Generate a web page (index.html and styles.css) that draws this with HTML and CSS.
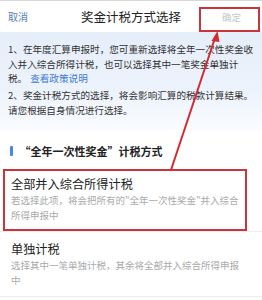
FILE: index.html
```html
<!DOCTYPE html>
<html lang="zh">
<head>
<meta charset="utf-8">
<link rel="stylesheet" href="styles.css">
</head>
<body>
<div class="page">
  <header class="nav">
    <span class="cancel">取消</span>
    <span class="title">奖金计税方式选择</span>
    <span class="confirm">确定</span>
  </header>
  <section class="info">
    <p>1、在年度汇算申报时，您可重新选择将全年一次性奖金收入并入综合所得计税，也可以选择其中一笔奖金单独计<br>税。<span class="link">查看政策说明</span></p>
    <p>2、奖金计税方式的选择，将会影响汇算的税款计算结果。请您根据自身情况进行选择。</p>
  </section>
  <h2 class="sec-title"><span class="bar"></span>“全年一次性奖金”计税方式</h2>
  <div class="option">
    <div class="opt-title">全部并入综合所得计税</div>
    <div class="opt-desc">若选择此项，将会把所有的"全年一次性奖金"并入综合所得申报中</div>
  </div>
  <div class="option">
    <div class="opt-title">单独计税</div>
    <div class="opt-desc">选择其中一笔单独计税，其余将全部并入综合所得申报中</div>
  </div>

  <div class="mark mark-confirm"></div>
  <div class="mark mark-option"></div>
  <svg class="arrow" width="262" height="300" viewBox="0 0 262 300">
    <line x1="171" y1="170" x2="215" y2="38" stroke="#d02b30" stroke-width="2"/>
    <polygon points="217.5,31 211.5,41 219.5,42" fill="#d02b30"/>
  </svg>
</div>
</body>
</html>
```

FILE: styles.css
```css
* { box-sizing: border-box; margin: 0; padding: 0; }
html, body { background: #fff; }
body {
  width: 262px;
  height: 300px;
  overflow: hidden;
  font-family: "Noto Sans CJK SC", "Noto Sans", sans-serif;
  color: #333;
}
.page { position: relative; width: 262px; height: 300px; }

.nav {
  height: 32px;
  display: grid;
  grid-template-columns: 1fr auto 1fr;
  align-items: center;
  padding: 0 8px;
  background: #fff;
  border-top: 1px solid #d8d8d8;
}
.cancel { font-size: 10px; color: #5a7fb5; }
.title { font-size: 12.5px; color: #222; }
.confirm { justify-self: end; font-size: 9.5px; color: #c8c8c8; margin-right: 13px; }

.info {
  padding: 10px 8px 14px;
  background: linear-gradient(180deg, #e6eefa 0%, #edf3fc 60%, #fafcff 100%);
  font-size: 9.6px;
  line-height: 14.5px;
  color: #333;
}
.info p + p { margin-top: 2.5px; }
.link { color: #3f7bd6; margin-left: 3px; }

.sec-title {
  display: flex;
  align-items: center;
  gap: 7px;
  padding: 13px 10px 9px;
  font-size: 11px;
  line-height: 14px;
  font-weight: 700;
  color: #222;
}
.bar { width: 2.5px; height: 10px; background: #4a86e8; border-radius: 1px; }

.option {
  padding: 9px 19px 9px 11px;
  border-bottom: 1px solid #ececec;
}
.option:last-of-type { border-bottom: 4px solid #f0f0f2; }
.opt-title { font-size: 12.2px; line-height: 16px; color: #222; }
.opt-desc { margin-top: 1px; font-size: 9.5px; line-height: 14.5px; color: #aaa; }

.mark {
  position: absolute;
  border: 2px solid #c8363c;
}
.mark-confirm { left: 199px; top: 7px; width: 61px; height: 25px; }
.mark-option { left: 3px; top: 169px; width: 244px; height: 62px; }
.arrow { position: absolute; left: 0; top: 0; }
```
